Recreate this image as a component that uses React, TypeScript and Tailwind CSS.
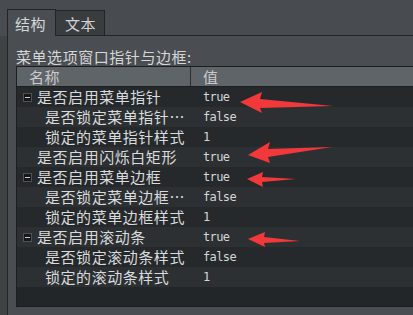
import React from "react";

type Row = { level: 0 | 1; icon?: boolean; label: string; value: string };

const rows: Row[] = [
  { level: 0, icon: true, label: "是否启用菜单指针", value: "true" },
  { level: 1, label: "是否锁定菜单指针…", value: "false" },
  { level: 1, label: "锁定的菜单指针样式", value: "1" },
  { level: 0, label: "是否启用闪烁白矩形", value: "true" },
  { level: 0, icon: true, label: "是否启用菜单边框", value: "true" },
  { level: 1, label: "是否锁定菜单边框…", value: "false" },
  { level: 1, label: "锁定的菜单边框样式", value: "1" },
  { level: 0, icon: true, label: "是否启用滚动条", value: "true" },
  { level: 1, label: "是否锁定滚动条样式", value: "false" },
  { level: 1, label: "锁定的滚动条样式", value: "1" },
];

const cjk = { fontFamily: '"Noto Sans CJK SC", "Noto Sans", sans-serif' };
const mono = { fontFamily: '"DejaVu Sans Mono", "Liberation Mono", monospace' };

export default function App() {
  return (
    <div
      className="relative w-[413px] h-[315px] overflow-hidden bg-[#484b4f] flex flex-col"
      style={cjk}
    >
      {/* tab bar */}
      <div className="flex items-end pt-[9px] h-[36px] pl-[7px] shrink-0">
        <div className="shrink-0 h-[27px] w-[49px] border-l border-t border-r border-[#222426] bg-[#4a4e52] flex items-center pl-[7px] text-[15px] tracking-[0.5px] text-[#d4d6d8] leading-none">
          结构
        </div>
        <div className="shrink-0 h-[26px] w-[49px] border-t border-r border-b border-[#222426] bg-[#3a3d40] flex items-center pl-[9px] text-[15px] tracking-[0.5px] text-[#cfd1d3] leading-none">
          文本
        </div>
        <div className="flex-1 h-full border-b border-[#222426]" />
      </div>

      {/* panel */}
      <div className="flex-1 flex min-w-0">
        <div className="w-[7px] shrink-0 bg-[#404346]" />
        <div className="flex-1 min-w-0 border-l border-[#222426] bg-[#4a4e52] pl-[8px] flex flex-col">
          <div className="pt-[12px] h-[30px] text-[15px] tracking-[0.55px] leading-[18px] text-[#d4d6d8] whitespace-nowrap">
            菜单选项窗口指针与边框:
          </div>
          <div className="w-[420px] shrink-0 h-[241px] border border-[#1c1e20] bg-[#232628] flex flex-col">
            {/* header */}
            <div className="h-[20px] flex bg-[#5f6468] border-b border-[#1c1e20] text-[15px] tracking-[0.5px] text-[#c9cbcd] leading-[19px]">
              <div className="w-[174px] shrink-0 pl-[12px] border-r border-[#2c2f31]">名称</div>
              <div className="flex-1 pl-[12px]">值</div>
            </div>
            {rows.map((r, i) => (
              <div
                key={i}
                className={`h-[20px] flex items-center ${i % 2 === 0 ? "bg-[#26292b]" : "bg-[#2d3032]"}`}
              >
                <div
                  className={`w-[174px] shrink-0 flex items-center whitespace-nowrap text-[15px] tracking-[0.55px] text-[#d8dadc] leading-[20px] ${
                    r.level === 1 ? "pl-[28px]" : r.icon ? "pl-[6px]" : "pl-[20px]"
                  }`}
                >
                  {r.icon && (
                    <div className="w-[9px] h-[9px] mr-[5px] shrink-0 border border-[#4f5357] bg-[#151719] flex items-center justify-center">
                      <div className="w-[5px] h-[1px] bg-[#c8cacc]" />
                    </div>
                  )}
                  {r.label}
                </div>
                <div
                  className="pl-[12px] text-[12px] tracking-[-0.6px] text-[#d4d6d8] leading-[20px]"
                  style={mono}
                >
                  {r.value}
                </div>
              </div>
            ))}
          </div>
        </div>
      </div>

      {/* red annotation arrows */}
      <svg
        className="absolute left-0 top-0 pointer-events-none"
        width={413}
        height={315}
        viewBox="0 0 413 315"
      >
        <g fill="#f2383a">
          <polygon points="240,102 262,92 260,99 333,106 260,108 262,113" />
          <polygon points="248,155 270,142 268,149 332,147 268,157 270,163" />
          <polygon points="247,179 263,172 262,177 296,179 262,182 263,187" />
          <polygon points="248,239 265,232 264,237 300,241 264,243 265,247" />
        </g>
      </svg>
    </div>
  );
}
